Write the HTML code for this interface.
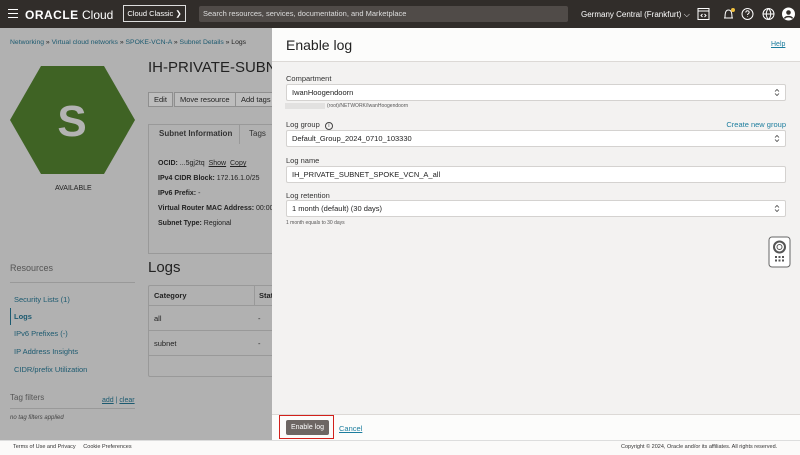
<!DOCTYPE html>
<html><head><meta charset="utf-8"><style>
*{box-sizing:border-box;margin:0;padding:0}
body{width:800px;height:455px;overflow:hidden;font-family:"Liberation Sans",sans-serif;background:#b1b1b1;position:relative;color:#222}
.a{position:absolute}
.top{left:0;top:0;width:800px;height:28px;background:#312d2a;color:#fff}
.lnk{color:#1c5a70}
.btn{position:absolute;height:15px;border:1px solid #8f8f8f;background:#bdbdbd;font-size:7.5px;line-height:13px;padding:0 5px;color:#222}
.lbl{position:absolute;font-size:7.5px;color:#333}
.fld{position:absolute;left:286px;width:500px;height:17px;background:#fff;border:1px solid #d4d2d0;border-radius:2px;font-size:7.5px;line-height:15px;padding-left:5px;color:#222}
.chev{position:absolute;right:5px;top:3px}
.res{position:absolute;left:14px;font-size:7.5px;color:#1c5a70}
</style></head><body>
<div class="a top">
 <div class="a" style="left:8px;top:9px;width:10px;height:9px;border-top:1.5px solid #fff;border-bottom:1.5px solid #fff"><div style="margin-top:2.5px;border-top:1.5px solid #fff"></div></div>
 <div class="a" style="left:25px;top:8px;font-size:12px;font-weight:bold;letter-spacing:.5px">ORACLE<span style="font-weight:normal;letter-spacing:0"> Cloud</span></div>
 <div class="a" style="left:123px;top:5px;width:63px;height:17px;border:1px solid #ddd;font-size:7.5px;line-height:15px;text-align:center">Cloud Classic ❯</div>
 <div class="a" style="left:199px;top:6px;width:369px;height:16px;background:#504b48;border-radius:2px;font-size:7.5px;line-height:16px;padding-left:4px;color:#ddd">Search resources, services, documentation, and Marketplace</div>
 <div class="a" style="left:581px;top:10px;font-size:8px">Germany Central (Frankfurt) ⌵</div>
 <svg class="a" style="left:697px;top:7px" width="103" height="14" fill="none" stroke="#fff" stroke-width="1">
  <rect x="1" y="1.5" width="11" height="11"/><path d="M1 4h11M5.5 7l-1.5 1.5 1.5 1.5M7.5 7l1.5 1.5-1.5 1.5"/>
  <path d="M27 11h9M28 11c0-6 1-8 3.5-8s3.5 2 3.5 8"/><circle cx="36" cy="3" r="2" fill="#f0c040" stroke="none"/>
  <circle cx="50.5" cy="7" r="5.5"/><path d="M48.8 5.5c0-1 .8-1.7 1.7-1.7s1.7.7 1.7 1.6c0 1.2-1.7 1.3-1.7 2.6M50.5 9.5v.5"/>
  <circle cx="71.5" cy="7" r="5.5"/><path d="M66 7h11M71.5 1.5c-3 3-3 8 0 11M71.5 1.5c3 3 3 8 0 11"/>
  <circle cx="91.5" cy="7" r="6" fill="#fff"/><circle cx="91.5" cy="5.5" r="2.3" fill="#312d2a" stroke="none"/><path d="M87.5 11.5c1-2.5 7-2.5 8 0" stroke="#312d2a" stroke-width="1.5"/>
 </svg>
</div>
<div class="a" style="left:10px;top:39px;font-size:6.8px" ><span class="lnk">Networking</span> » <span class="lnk">Virtual cloud networks</span> » <span class="lnk">SPOKE-VCN-A</span> » <span class="lnk">Subnet Details</span> » Logs</div>
<svg class="a" style="left:10px;top:66px" width="125" height="108"><polygon points="31,0 94,0 125,54 94,108 31,108 0,54" fill="#3f6324"/><text x="62" y="70" font-family="Liberation Sans" font-weight="bold" font-size="44" fill="#b3b3b3" text-anchor="middle">S</text></svg>
<div class="a" style="left:55px;top:185px;font-size:7px">AVAILABLE</div>
<div class="a" style="left:148px;top:59px;font-size:15px;color:#222;white-space:nowrap">IH-PRIVATE-SUBNET</div>
<div class="btn" style="left:148px;top:92px">Edit</div>
<div class="btn" style="left:174px;top:92px">Move resource</div>
<div class="btn" style="left:235px;top:92px">Add tags</div>
<div class="a" style="left:148px;top:124px;width:130px;height:130px;border:1px solid #999"></div>
<div class="a" style="left:148px;top:124px;width:92px;height:20px;border:1px solid #999;border-bottom:none;background:#b1b1b1;font-size:8px;line-height:18px;padding-left:10px;font-weight:bold;color:#333">Subnet Information</div>
<div class="a" style="left:249px;top:129px;font-size:8px;color:#333">Tags</div>
<div class="a" style="left:158px;top:156px;font-size:7px;line-height:15px;color:#222"><b>OCID:</b> ...5gj2tq &nbsp;<u>Show</u> &nbsp;<u>Copy</u><br><b>IPv4 CIDR Block:</b> 172.16.1.0/25<br><b>IPv6 Prefix:</b> -<br><b style="white-space:nowrap">Virtual Router MAC Address:</b> 00:00<br><b>Subnet Type:</b> Regional</div>
<div class="a" style="left:10px;top:263px;font-size:9px;color:#555">Resources</div>
<div class="a" style="left:10px;top:282px;width:125px;border-top:1px solid #999"></div>
<div class="res" style="top:295px">Security Lists (1)</div>
<div class="a" style="left:10px;top:308px;height:17px;border-left:1.5px solid #1c5a70"></div>
<div class="res" style="top:312px;font-weight:bold">Logs</div>
<div class="res" style="top:329px">IPv6 Prefixes (-)</div>
<div class="res" style="top:347px">IP Address Insights</div>
<div class="res" style="top:365px">CIDR/prefix Utilization</div>
<div class="a" style="left:10px;top:393px;font-size:8px;color:#555">Tag filters</div>
<div class="a" style="left:102px;top:397px;font-size:7px;color:#1c5a70"><u>add</u> | <u>clear</u></div>
<div class="a" style="left:10px;top:408px;width:125px;border-top:1px solid #999"></div>
<div class="a" style="left:10px;top:415px;font-size:6px;font-style:italic;color:#444">no tag filters applied</div>
<div class="a" style="left:148px;top:259px;font-size:15px">Logs</div>
<div class="a" style="left:148px;top:285px;width:130px;height:92px;border:1px solid #999;border-radius:2px"></div>
<div class="a" style="left:148px;top:285px;width:130px;height:21px;border-bottom:1px solid #999;font-size:7.5px;font-weight:bold;line-height:21px;padding-left:6px">Category<span style="position:absolute;left:106px;border-left:1px solid #999;padding-left:4px">Stat</span></div>
<div class="a" style="left:148px;top:306px;width:130px;height:25px;border-bottom:1px solid #999;font-size:7.5px;line-height:25px;padding-left:6px">all<span style="position:absolute;left:110px">-</span></div>
<div class="a" style="left:148px;top:331px;width:130px;height:25px;border-bottom:1px solid #999;font-size:7.5px;line-height:25px;padding-left:6px">subnet<span style="position:absolute;left:110px">-</span></div>
<!-- panel -->
<div class="a" style="left:272px;top:28px;width:528px;height:412px;background:#f3f2f1"></div>
<div class="a" style="left:272px;top:28px;width:528px;height:34px;background:#fcfcfb;border-bottom:1px solid #dcd9d6"></div>
<div class="a" style="left:286px;top:37px;font-size:14px;color:#222">Enable log</div>
<div class="a" style="left:771px;top:41px;font-size:7px;color:#1c7d9e;text-decoration:underline">Help</div>
<div class="lbl" style="left:286px;top:74px">Compartment</div>
<div class="fld" style="top:84px">IwanHoogendoorn<svg class="chev" width="6" height="9" fill="none" stroke="#444" stroke-width=".8"><path d="M1 3.5l2-2 2 2M1 5.5l2 2 2-2"/></svg></div>
<div class="a" style="left:285px;top:103px;width:40px;height:6px;background:#e2e1e0"></div>
<div class="a" style="left:327px;top:103px;font-size:5px;color:#555">(root)/NETWORK/IwanHoogendoorn</div>
<div class="lbl" style="left:286px;top:120px">Log group <span style="display:inline-block;width:8px;height:8px;border:1px solid #444;border-radius:50%;font-size:5px;text-align:center;line-height:7px;margin-left:3px">i</span></div>
<div class="a" style="left:786px;top:120px;font-size:7.5px;color:#1c7d9e;transform:translateX(-100%);white-space:nowrap">Create new group</div>
<div class="fld" style="top:130px;padding-left:5px">Default_Group_2024_0710_103330<svg class="chev" width="6" height="9" fill="none" stroke="#444" stroke-width=".8"><path d="M1 3.5l2-2 2 2M1 5.5l2 2 2-2"/></svg></div>
<div class="lbl" style="left:286px;top:156px">Log name</div>
<div class="fld" style="top:166px">IH_PRIVATE_SUBNET_SPOKE_VCN_A_all</div>
<div class="lbl" style="left:286px;top:191px">Log retention</div>
<div class="fld" style="top:200px">1 month (default) (30 days)<svg class="chev" width="6" height="9" fill="none" stroke="#444" stroke-width=".8"><path d="M1 3.5l2-2 2 2M1 5.5l2 2 2-2"/></svg></div>
<div class="a" style="left:286px;top:220px;font-size:5px;color:#555">1 month equals to 30 days</div>
<svg class="a" style="left:768px;top:236px" width="23" height="32" fill="none" stroke="#555"><rect x="1" y="1" width="21" height="30" rx="3" fill="#fff" stroke="#666"/><circle cx="11.5" cy="11" r="5.5" stroke-width="2"/><circle cx="11.5" cy="11" r="2.5"/><g fill="#555" stroke="none"><rect x="7" y="20" width="2" height="2"/><rect x="10.5" y="20" width="2" height="2"/><rect x="14" y="20" width="2" height="2"/><rect x="7" y="23.5" width="2" height="2"/><rect x="10.5" y="23.5" width="2" height="2"/><rect x="14" y="23.5" width="2" height="2"/></g></svg>
<div class="a" style="left:272px;top:414px;width:528px;height:26px;background:#fcfcfb;border-top:1px solid #dcd9d6"></div>
<div class="a" style="left:279px;top:415px;width:55px;height:24px;border:1.5px solid #d2201b"></div>
<div class="a" style="left:286px;top:420px;width:43px;height:15px;background:#6d6663;border-radius:2px;color:#fff;font-size:7px;line-height:15px;text-align:center">Enable log</div>
<div class="a" style="left:339px;top:424px;font-size:7.5px;color:#1c7d9e;text-decoration:underline">Cancel</div>
<div class="a" style="left:0;top:440px;width:800px;height:15px;background:#fbfaf9;border-top:1px solid #ddd"></div>
<div class="a" style="left:13px;top:444px;font-size:5.5px;color:#333">Terms of Use and Privacy &nbsp;&nbsp;&nbsp;&nbsp;Cookie Preferences</div>
<div class="a" style="left:621px;top:444px;font-size:5.5px;color:#333">Copyright © 2024, Oracle and/or its affiliates. All rights reserved.</div>
</body></html>
